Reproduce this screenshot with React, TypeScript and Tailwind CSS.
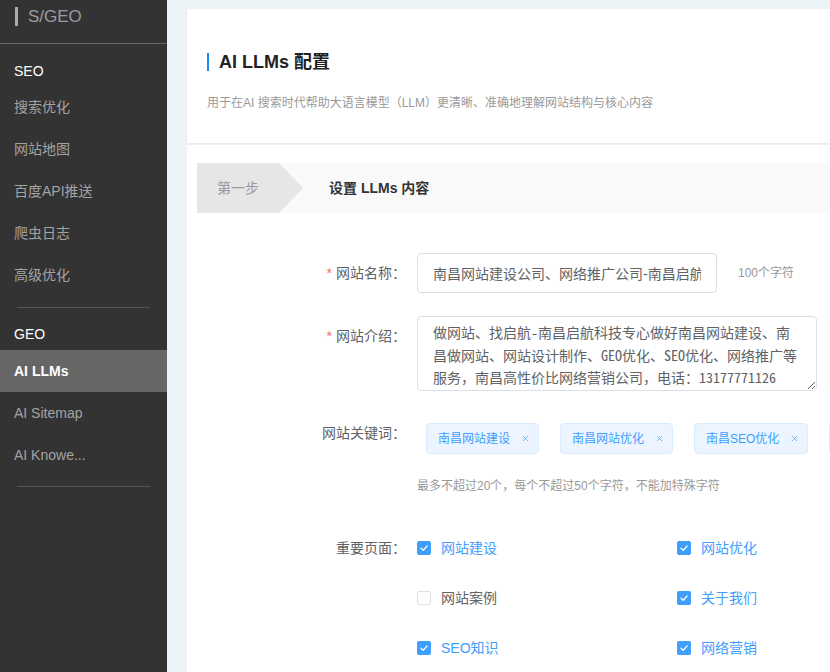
import { X } from 'lucide-react'

const SEO_ITEMS = ['搜索优化', '网站地图', '百度API推送', '爬虫日志', '高级优化']
const GEO_ITEMS = ['AI LLMs', 'AI Sitemap', 'AI Knowe...']
const KEYWORDS = ['南昌网站建设', '南昌网站优化', '南昌SEO优化', '南昌网站推广']
const PAGES = [
  { name: '网站建设', checked: true },
  { name: '网站优化', checked: true },
  { name: '网站案例', checked: false },
  { name: '关于我们', checked: true },
  { name: 'SEO知识', checked: true },
  { name: '网络营销', checked: true },
]

const INTRO =
  '做网站、找启航-南昌启航科技专心做好南昌网站建设、南\n昌做网站、网站设计制作、GEO优化、SEO优化、网络推广等\n服务，南昌高性价比网络营销公司，电话：13177771126'

function Sidebar() {
  return (
    <aside className="w-[167px] shrink-0 bg-[#333] min-h-screen text-[14px]">
      <div className="h-[44px] border-b border-[#666] flex items-start pt-[7px]">
        <span className="ml-[15px] w-[3px] h-[19px] bg-[#aaa]" />
        <span className="ml-[10px] text-[17px] leading-[19px] text-[#9a9ca3]">S/GEO</span>
      </div>

      <div className="mt-[12px] h-[30px] pl-[14px] flex items-center text-white">SEO</div>
      {SEO_ITEMS.map(item => (
        <div key={item} className="h-[42px] pl-[14px] flex items-center text-[#a3a3a3]">{item}</div>
      ))}
      <div className="mt-[11px] mx-[17px] border-t border-[#555]" />

      <div className="mt-[11px] h-[31px] pl-[14px] flex items-center text-white">GEO</div>
      {GEO_ITEMS.map((item, i) => (
        <div
          key={item}
          className={i === 0
            ? 'h-[42px] pl-[14px] flex items-center bg-[#666] text-white font-semibold'
            : 'h-[42px] pl-[14px] flex items-center text-[#a3a3a3]'}
        >
          {item}
        </div>
      ))}
      <div className="mt-[10px] mx-[17px] border-t border-[#555]" />
    </aside>
  )
}

function FormLabel({ text, required = false }: { text: string; required?: boolean }) {
  return (
    <div className="w-[209px] shrink-0 h-[40px] leading-[40px] text-right text-[14px] text-[#606266]">
      {required && <span className="text-[#f56c6c] mr-[4px]">*</span>}
      {text}
    </div>
  )
}

function CheckBox({ name, checked }: { name: string; checked: boolean }) {
  return (
    <div className="h-[40px] flex items-center">
      {checked ? (
        <span className="w-[14px] h-[14px] rounded-[2px] bg-[#409eff] flex items-center justify-center">
          <svg width="14" height="14" viewBox="0 0 14 14" fill="none">
            <path d="M4 7.2 L6.2 9.3 L10.2 4.9" stroke="white" strokeWidth="1.3" strokeLinecap="round" strokeLinejoin="round" />
          </svg>
        </span>
      ) : (
        <span className="w-[14px] h-[14px] rounded-[2px] bg-white border border-[#dcdfe6]" />
      )}
      <span className={checked ? 'ml-[10px] text-[14px] text-[#409eff]' : 'ml-[10px] text-[14px] text-[#606266]'}>
        {name}
      </span>
    </div>
  )
}

export default function App() {
  return (
    <div className="flex min-h-screen font-['Liberation_Sans','Noto_Sans_CJK_SC',sans-serif]">
      <Sidebar />

      <main className="flex-1 min-w-0 bg-[#edf4f8] pt-[9px] pl-[20px] overflow-hidden">
        {/* Header card */}
        <section className="bg-white h-[134px] pt-[44px] pl-[20px] shadow-[0_1px_3px_rgba(0,0,0,0.04)]">
          <div className="flex items-center h-[18px]">
            <span className="w-[2px] h-[18px] bg-[#1f8cf0]" />
            <h1 className="ml-[10px] text-[18px] leading-[18px] font-bold text-[#222] whitespace-nowrap">AI LLMs 配置</h1>
          </div>
          <p className="mt-[23px] text-[12px] leading-[18px] text-[#999] whitespace-nowrap">
            用于在AI 搜索时代帮助大语言模型（LLM）更清晰、准确地理解网站结构与核心内容
          </p>
        </section>

        {/* Form card */}
        <section className="mt-[2px] bg-white pt-[18px] pl-[10px] h-[527px]">
          <div className="flex h-[50px] bg-[#f9f9f9]">
            <div className="w-[106px] shrink-0 bg-[#e6e6e6] pl-[20px] flex items-center text-[14px] text-[#999] [clip-path:polygon(0_0,82px_0,106px_50%,82px_100%,0_100%)]">
              第一步
            </div>
            <div className="ml-[26px] flex items-center text-[14px] font-bold text-[#333] whitespace-nowrap">
              设置 LLMs 内容
            </div>
          </div>

          {/* 网站名称 */}
          <div className="mt-[40px] flex items-center">
            <FormLabel text="网站名称：" required />
            <input
              className="ml-[11px] w-[300px] h-[40px] shrink-0 border border-[#dcdfe6] rounded-[4px] px-[15px] text-[14px] text-[#606266] outline-none"
              defaultValue="南昌网站建设公司、网络推广公司-南昌启航科技"
            />
            <span className="ml-[21px] text-[12px] text-[#999] whitespace-nowrap">100个字符</span>
          </div>

          {/* 网站介绍 */}
          <div className="mt-[23px] flex items-start">
            <FormLabel text="网站介绍：" required />
            <textarea
              className="ml-[11px] w-[400px] h-[75px] shrink-0 border border-[#dcdfe6] rounded-[4px] px-[15px] pt-[4px] text-[14px] leading-[22.5px] text-[#606266] outline-none overflow-hidden whitespace-pre font-['Noto_Sans_Mono_CJK_SC','Liberation_Mono','Noto_Sans_CJK_SC',monospace]"
              wrap="off"
              defaultValue={INTRO}
            />
          </div>

          {/* 网站关键词 */}
          <div className="mt-[22px] flex items-start">
            <FormLabel text="网站关键词：" />
            <div className="ml-[20px] mt-[10px] flex gap-[21px] flex-nowrap">
              {KEYWORDS.map(k => (
                <span
                  key={k}
                  className="h-[31px] shrink-0 pl-[11px] pr-[8px] flex items-center border border-[#d9ecff] bg-[#ecf5ff] text-[#409eff] text-[12px] rounded-[4px] whitespace-nowrap"
                >
                  {k}
                  <X className="ml-[11px] w-[9px] h-[9px]" strokeWidth={1.8} />
                </span>
              ))}
            </div>
          </div>
          <p className="mt-[23px] ml-[220px] text-[12px] leading-[18px] text-[#999] whitespace-nowrap">
            最多不超过20个，每个不超过50个字符，不能加特殊字符
          </p>

          {/* 重要页面 */}
          <div className="mt-[33px] flex items-start">
            <FormLabel text="重要页面：" />
            <div className="ml-[11px] grid grid-cols-[260px_260px] gap-y-[10px]">
              {PAGES.map(p => (
                <CheckBox key={p.name} name={p.name} checked={p.checked} />
              ))}
            </div>
          </div>
        </section>
      </main>
    </div>
  )
}
